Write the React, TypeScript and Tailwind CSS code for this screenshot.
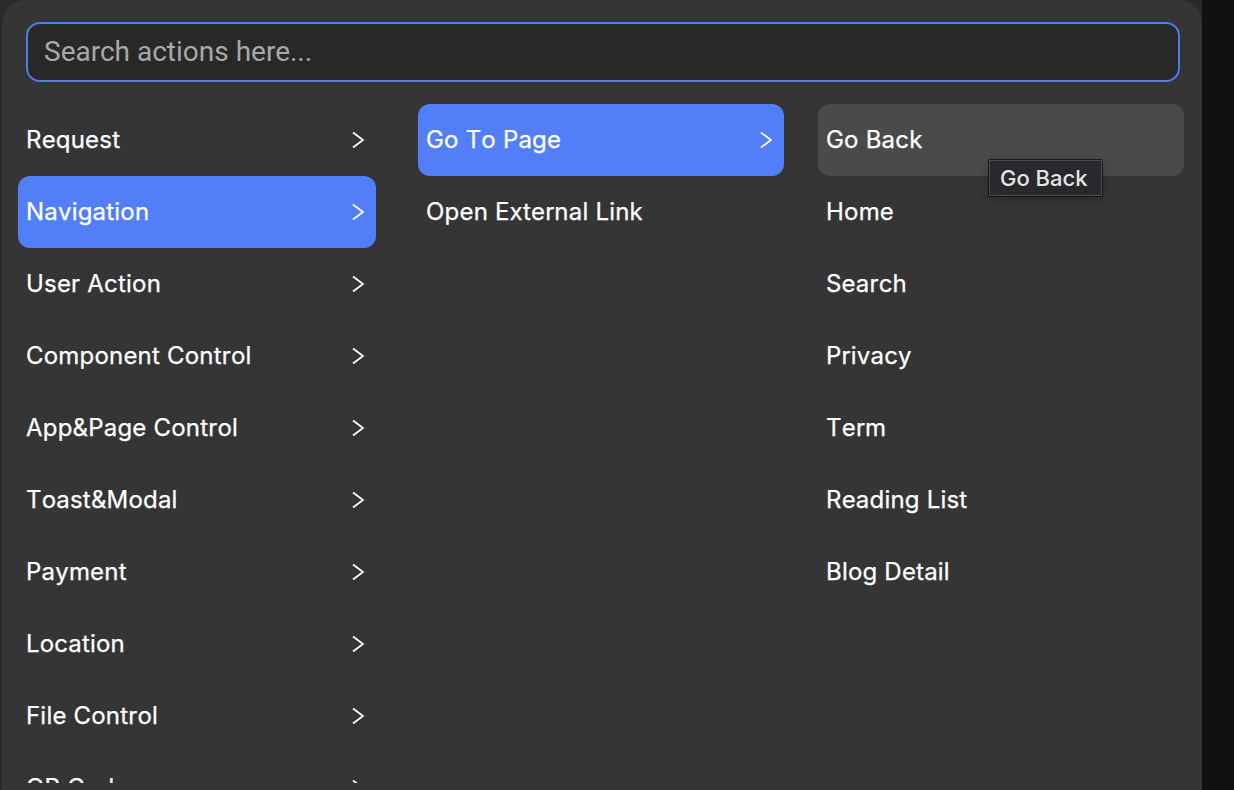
const categories = ["Request", "Navigation", "User Action", "Component Control", "App&Page Control", "Toast&Modal", "Payment", "Location", "File Control", "QR Code"];
const pages = ["Go Back", "Home", "Search", "Privacy", "Term", "Reading List", "Blog Detail"];

function Chevron() {
  return (
    <svg width="14" height="20" viewBox="0 0 14 20" fill="none" className="shrink-0 stroke-white">
      <path d="M2 2.5 L12 10 L2 17.5" strokeWidth="1.7" />
    </svg>
  );
}

function Row({ label, active, hover, arrow }: { label: string; active?: boolean; hover?: boolean; arrow?: boolean }) {
  return (
    <div className={`flex h-[72px] shrink-0 items-center justify-between rounded-xl pl-2 pr-[11px] ${active ? "bg-[#527ff8]" : hover ? "bg-[#4a4a4a]" : ""}`}>
      <span className="text-[24px] tracking-[0.2px] text-white [font-kerning:none] [-webkit-text-stroke:0.25px_white]">{label}</span>
      {arrow && <Chevron />}
    </div>
  );
}

export default function App() {
  return (
    <div className="h-[790px] w-[1234px] overflow-hidden bg-[#111111] font-['Inter',sans-serif]">
      <div className="flex h-[790px] w-[1202px] bg-[#2a2a2a] pl-[2px]">
        <div className="relative h-[790px] w-[1200px] rounded-t-[24px] bg-[#353535]">
          <div className="px-6 pt-[22px]">
            <div className="mr-[-2px] flex h-[60px] items-center rounded-[14px] border-2 border-[#4f7de8] bg-[#282828] pl-4">
              <span className="font-['Roboto',sans-serif] text-[28px] text-[#a8a8a8]">Search actions here...</span>
            </div>
          </div>
          <div className="mt-[22px] flex h-[679px] gap-[42px] overflow-hidden pl-4">
            <div className="flex w-[358px] flex-col">
              {categories.map((c) => (
                <Row key={c} label={c} arrow active={c === "Navigation"} />
              ))}
            </div>
            <div className="flex w-[366px] flex-col">
              <Row label="Go To Page" arrow active />
              <Row label="Open External Link" />
            </div>
            <div className="ml-[-8px] flex w-[366px] flex-col">
              {pages.map((p) => (
                <Row key={p} label={p} hover={p === "Go Back"} />
              ))}
            </div>
          </div>
          <div className="absolute left-[987px] top-[160px] rounded-[1px] border border-[#4c4c4c] bg-[#29292d] py-px pl-[10px] pr-[13px] text-[22px] font-medium leading-[32px] text-[#e4e4e4] shadow-[0_4px_12px_rgba(0,0,0,0.25)] ring-1 ring-black/60">
            Go Back
          </div>
        </div>
      </div>
    </div>
  );
}
